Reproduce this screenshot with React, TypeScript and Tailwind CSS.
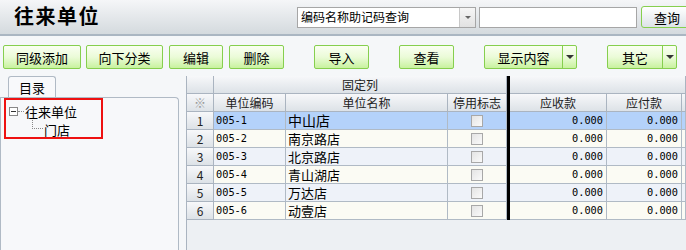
import React from "react";

const F = { fontFamily: '"Noto Sans CJK SC", "Liberation Sans", sans-serif' };
const MONO = { fontFamily: '"DejaVu Sans Mono", "Liberation Mono", monospace', fontSize: 10.3 };

function Btn({ label, w, split }: { label: string; w: number; split?: boolean }) {
  return (
    <div
      className="h-[24px] flex border border-[#86cf4e] rounded-[2px] bg-gradient-to-b from-[#fafff2] via-[#ebfbd8] to-[#c8f29e] text-[13px] text-black leading-none"
      style={{ width: w }}
    >
      <div className="flex-1 flex items-center justify-center">{label}</div>
      {split && (
        <div className="w-[14px] border-l border-[#86cf4e] flex items-center justify-center">
          <div className="w-0 h-0 border-l-[4px] border-r-[4px] border-t-[4px] border-l-transparent border-r-transparent border-t-[#333]" />
        </div>
      )}
    </div>
  );
}

const rows = [
  { n: "1", code: "005-1", name: "中山店" },
  { n: "2", code: "005-2", name: "南京路店" },
  { n: "3", code: "005-3", name: "北京路店" },
  { n: "4", code: "005-4", name: "青山湖店" },
  { n: "5", code: "005-5", name: "万达店" },
  { n: "6", code: "005-6", name: "动壹店" },
];

const hdr = "bg-gradient-to-b from-[#f7f8fa] to-[#dde2e7] border-r border-b border-[#aab4c0] flex items-center justify-center text-[12px] text-[#222]";
const cell = "border-r border-b border-[#b0bac5] flex items-center text-[12px]";

export default function App() {
  return (
    <div className="w-[686px] h-[250px] overflow-hidden bg-[#f5f7f9] text-black" style={F}>
      {/* header */}
      <div className="h-[36px] flex items-center bg-gradient-to-b from-[#f5f6f8] to-[#d4dade] border-b-2 border-[#aab6c2]">
        <div className="ml-[14px] w-[86px] shrink-0 whitespace-nowrap text-[20px] font-bold tracking-[1.5px] leading-none pb-[2px]">往来单位</div>
        <div className="ml-[197px] shrink-0 w-[179px] h-[21px] bg-white border border-[#a6a6a6] flex items-center">
          <div className="flex-1 pl-[3px] text-[12px] leading-none whitespace-nowrap">编码名称助记码查询</div>
          <div className="w-[16px] h-full border-l border-[#c8c8c8] bg-gradient-to-b from-[#f6f6f6] to-[#e2e2e2] flex items-center justify-center">
            <div className="w-0 h-0 border-l-[3px] border-r-[3px] border-t-[3px] border-l-transparent border-r-transparent border-t-[#666]" />
          </div>
        </div>
        <div className="ml-[3px] shrink-0 w-[158px] h-[21px] bg-white border border-[#a6a6a6]" />
        <div className="ml-[4px] shrink-0 w-[52px] h-[22px] border border-[#86cf4e] rounded-[3px] bg-gradient-to-b from-[#ffffff] to-[#dde3e8] flex items-center justify-center text-[13px] leading-none">
          查询
        </div>
      </div>
      {/* toolbar */}
      <div className="flex items-start mt-[9px] h-[31px]">
        <div className="ml-[3px]"><Btn label="同级添加" w={78} /></div>
        <div className="ml-[5px]"><Btn label="向下分类" w={77} /></div>
        <div className="ml-[6px]"><Btn label="编辑" w={54} /></div>
        <div className="ml-[6px]"><Btn label="删除" w={55} /></div>
        <div className="ml-[30px]"><Btn label="导入" w={55} /></div>
        <div className="ml-[30px]"><Btn label="查看" w={55} /></div>
        <div className="ml-[30px]"><Btn label="显示内容" w={93} split /></div>
        <div className="ml-[30px]"><Btn label="其它" w={70} split /></div>
      </div>
      {/* main */}
      <div className="flex h-[174px]">
        <div className="w-[179px] flex flex-col">
          <div className="ml-[8px] w-[48px] h-[21px] border border-b-0 border-[#b0bac5] rounded-t-[3px] bg-[#f8f9fb] flex items-center justify-center text-[13px] leading-none">
            目录
          </div>
          <div className="flex-1 border border-b-0 border-[#b0bac5] rounded-tr-[4px] bg-[#f7f8fa] pl-[3px]">
            <div className="w-[99px] h-[41px] border-2 border-[#ee1111] pl-[3px] pt-[3px] flex flex-col">
              <div className="flex items-center h-[16px]">
                <div className="w-[9px] h-[9px] border border-[#888] bg-white flex items-center justify-center shrink-0">
                  <div className="w-[5px] h-[1px] bg-[#333]" />
                </div>
                <div className="w-[6px] border-t border-dotted border-[#888] shrink-0" />
                <div className="text-[13px] leading-none ml-[1px] whitespace-nowrap">往来单位</div>
              </div>
              <div className="flex items-start h-[17px] pt-[1px]">
                <div className="ml-[23px] w-[11px] h-[9px] border-l border-b border-dotted border-[#888] shrink-0" />
                <div className="text-[13px] leading-none ml-[1px] mt-[3px] whitespace-nowrap">门店</div>
              </div>
            </div>
          </div>
        </div>
        <div className="ml-[7px] flex-1 border-l border-[#aab4c0] bg-[#edf0f3] flex flex-col">
          <div className="grid grid-cols-[27px_72px_162px_59px_3px_97px_75px_1fr]">
            {/* header row 1 */}
            <div className={`${hdr} h-[18px]`} />
            <div className={`${hdr} h-[18px] col-span-3`}>固定列</div>
            <div className="bg-black h-[18px]" />
            <div className={`${hdr} h-[18px] col-span-3`} />
            {/* header row 2 */}
            <div className={`${hdr} h-[18px] text-[#999] text-[10px]`}>※</div>
            <div className={`${hdr} h-[18px]`}>单位编码</div>
            <div className={`${hdr} h-[18px]`}>单位名称</div>
            <div className={`${hdr} h-[18px]`}>停用标志</div>
            <div className="bg-black h-[18px]" />
            <div className={`${hdr} h-[18px]`}>应收款</div>
            <div className={`${hdr} h-[18px]`}>应付款</div>
            <div className={`${hdr} h-[18px]`} />
            {rows.map((r, i) => {
              const bg = i === 0 ? "bg-[#b4d2fa]" : i % 2 === 1 ? "bg-[#fbfbf4]" : "bg-[#eef2f9]";
              return (
                <React.Fragment key={r.n}>
                  <div className={`${hdr} h-[18px]`}>{r.n}</div>
                  <div className={`${cell} ${bg} h-[18px] pl-[2px]`} style={MONO}>{r.code}</div>
                  <div className={`${cell} ${bg} h-[18px] pl-[2px] ${i === 0 ? "text-[14px]" : "text-[13px]"}`}>{r.name}</div>
                  <div className={`${cell} ${bg} h-[18px] justify-center`}>
                    <div className="w-[12px] h-[12px] border border-[#a8a8a8] bg-gradient-to-br from-[#e4e4e4] to-[#fafafa]" />
                  </div>
                  <div className="bg-black h-[18px]" />
                  <div className={`${cell} ${bg} h-[18px] justify-end pr-[3px]`} style={MONO}>0.000</div>
                  <div className={`${cell} ${bg} h-[18px] justify-end pr-[3px]`} style={MONO}>0.000</div>
                  <div className={`${cell} ${bg} h-[18px]`} />
                </React.Fragment>
              );
            })}
          </div>
        </div>
      </div>
    </div>
  );
}
